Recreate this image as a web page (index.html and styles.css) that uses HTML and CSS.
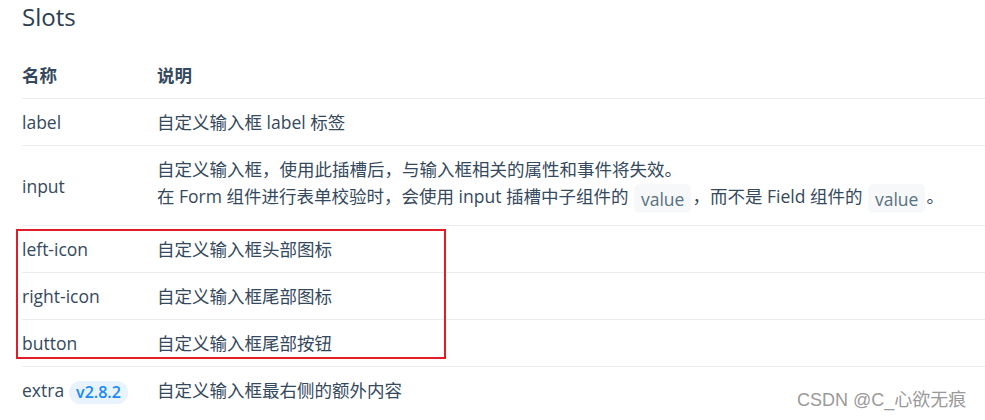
FILE: index.html
```html
<!DOCTYPE html>
<html lang="zh-CN">
<head>
<meta charset="utf-8">
<title>Slots</title>
<link rel="stylesheet" href="styles.css">
</head>
<body>
<div class="doc">
  <h3 class="title">Slots</h3>
  <table class="slots">
    <thead>
      <tr><th class="c-name">名称</th><th>说明</th></tr>
    </thead>
    <tbody>
      <tr><td class="c-name">label</td><td>自定义输入框 label 标签</td></tr>
      <tr><td class="c-name">input</td><td>自定义输入框，使用此插槽后，与输入框相关的属性和事件将失效。<br>在 Form 组件进行表单校验时，会使用 input 插槽中子组件的 <code class="code">value</code>，而不是 Field 组件的 <code class="code">value</code>。</td></tr>
      <tr><td class="c-name">left-icon</td><td>自定义输入框头部图标</td></tr>
      <tr><td class="c-name">right-icon</td><td>自定义输入框尾部图标</td></tr>
      <tr><td class="c-name">button</td><td>自定义输入框尾部按钮</td></tr>
      <tr><td class="c-name">extra<span class="badge">v2.8.2</span></td><td>自定义输入框最右侧的额外内容</td></tr>
    </tbody>
  </table>
</div>
<div class="highlight-box"></div>
<div class="watermark">CSDN @C_心欲无痕</div>
</body>
</html>
```

FILE: styles.css
```css
html, body {
  margin: 0;
  padding: 0;
  background: #ffffff;
}

body {
  font-family: "Open Sans", "Noto Sans CJK SC", sans-serif;
  color: #34495e;
  position: relative;
}

.doc {
  padding-left: 22px;
}

.title {
  margin: 0 0 20px 0;
  padding-top: 1px;
  font-size: 24px;
  line-height: 31px;
  font-weight: 500;
  color: #2c3e50;
}

.slots {
  width: 963px;
  border-collapse: collapse;
  font-size: 17.5px;
  line-height: 26px;
}

.slots th {
  text-align: left;
  font-weight: 700;
  padding: 10px 0;
  color: #34495e;
}

.slots td {
  padding: 10px 0;
  border-top: 1px solid #ebedf0;
  vertical-align: middle;
}

.slots .c-name {
  width: 135px;
}

.code {
  display: inline-block;
  font-family: "Open Sans", sans-serif;
  font-size: 17.5px;
  line-height: 24px;
  padding: 2.5px 7px;
  margin: 2px 1px;
  border-radius: 5px;
  background: #f7f8fa;
  color: #58727e;
  vertical-align: middle;
}

.badge {
  display: inline-block;
  height: 23px;
  line-height: 23px;
  padding: 0 7px;
  margin-left: 5px;
  font-size: 16px;
  font-weight: 600;
  color: #1989fa;
  background: #e8f3fe;
  border-radius: 12px;
  vertical-align: middle;
}

.highlight-box {
  position: absolute;
  left: 16px;
  top: 229px;
  width: 426px;
  height: 126px;
  border: 2px solid #e31d25;
}

.watermark {
  position: absolute;
  left: 797px;
  top: 389px;
  font-family: "Liberation Sans", "Noto Sans CJK SC", sans-serif;
  font-size: 18px;
  line-height: 22px;
  color: #9a9a9a;
  text-shadow: 0 0 1px #ffffff;
}
```
